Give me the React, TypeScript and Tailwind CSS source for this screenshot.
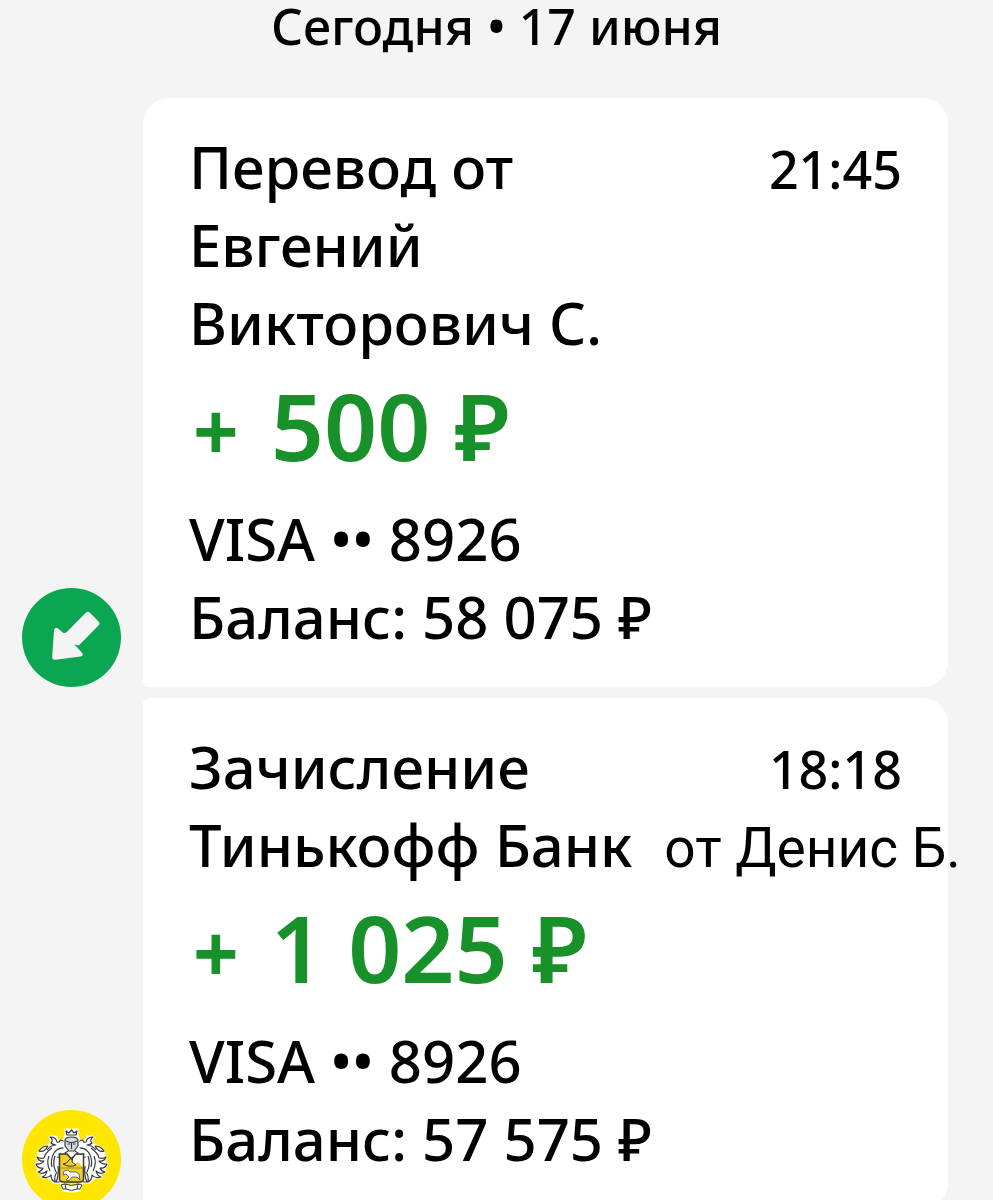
import React from "react";
import clsx from "clsx";

interface Operation {
	title: string[];
	note?: string;
	time: string;
	amount: string;
	card: string;
	balance: string;
	icon: React.ReactNode;
	className: string;
}

const IncomeIcon: React.FC = () => (
	<svg viewBox="0 0 99 99" className="size-[99px] shrink-0" role="img" aria-label="Перевод">
		<circle cx="49.500" cy="49.500" r="49.500" fill="#0aa652" />
		<path
			d="M64 24.500 Q66 22.800 68 24.800 L76.500 33.500 Q78.500 35.500 76.500 37.500 L57.500 56.800 Q56 57.800 54.500 57 L52.200 56.200 L59.800 64.500 Q62.200 68 58.500 68.600 L33.500 71.800 Q30 72 30.200 68.500 L32 42.500 Q32.500 38.500 36 40.500 L41.500 45 Q43.200 45.500 45 43.800 Z"
			fill="#f4f4f4"
		/>
	</svg>
);

// left half of the mantling, the right one is mirrored
const CrestWing: React.FC = () => (
	<g>
		<path
			d="M43 35 L41 31 L35 31 L34 27 L28 27 L30 31 L28 35 L20 38 L17 43 L23 42 L15 47 L18 51 L14 54 L17 58 L16 62 L21 63 L20 67 L26 67 L32 72 L37 72 L37 47 L45 41 Z"
			fill="#fff"
			stroke="#fff"
			strokeWidth="3"
			strokeLinejoin="round"
		/>
		<path
			d="M44 35 Q42 30 38 30 Q38 33 35 32 Q34 27 28 27 Q32 30 29 33 Q31 35 34 35 Q29 35 25 40 M44 38 Q36 37 32 43 Q28 50 30 57 M42 41 Q36 43 36 48 M26 36 Q20 36 17 41 Q22 43 26 36 M30 38 Q23 43 22 48 Q18 49 15 47 Q17 52 22 51 Q19 55 14 54 Q16 59 21 58 Q20 61 16 62 Q21 65 25 61 Q24 66 20 67 Q26 69 29 65 Q29 70 33 72 Q32 66 35 62 M27 46 Q24 53 28 61 M33 46 Q30 54 34 62 M36 56 Q37 66 34 72 H38"
			fill="none"
			stroke="#34383f"
			strokeWidth="1.200"
			strokeLinejoin="round"
		/>
	</g>
);

const BankCrest: React.FC = () => (
	<svg viewBox="0 0 99 99" className="size-[99px] shrink-0" role="img" aria-label="Тинькофф Банк">
		<circle cx="49.500" cy="49.500" r="49.500" fill="#fee600" />
		<CrestWing />
		<g transform="translate(99 0) scale(-1 1)">
			<CrestWing />
		</g>
		<path d="M43 28 V39 L38 45 H61 L56 39 V28 L55 25 V20 H44 V25 Z" fill="#fff" stroke="#fff" strokeWidth="3" />
		<g fill="none" stroke="#34383f" strokeWidth="1.200" strokeLinejoin="round">
			<path d="M44 21 L47 23 L49.500 20 L52 23 L55 21 L54 25 H45 Z" />
			<path d="M43 30 Q44 27 49.500 27 Q55 27 56 30 V36 L52 41 H47 L43 36 Z" fill="#d9dade" />
			<path d="M44 31 L48 32.500 H51 L55 31 M49.500 33 V39 M45.500 34 H48 M51 34 H53.500 M46 41 L43 43 L49.500 50 L56 43 L53 41" />
		</g>
		<path d="M37.500 44 H45 L49.500 49 L54 44 H61.500 V69 Q61.500 72 57 72 H42 Q37.500 72 37.500 69 Z" fill="#f2cf1e" stroke="#34383f" strokeWidth="1.500" />
		<path d="M54 45 H60.500 V57 L56 52 L51 55 L50 50 Z" fill="#fff" />
		<path d="M38 58 H61" stroke="#a08a20" strokeWidth="1" />
		<path d="M41 54 Q45 54 47 50 L51 47 L50 52 L54 55 Q48 58 41 54 Z" fill="none" stroke="#34383f" strokeWidth="1" />
		<path d="M41 65 L42 61 L46 60 L48 62 H54 L57 64 L58 70 L55 67 H50 L47 71 L44 70 L47 67 L44 64 Z" fill="#fff" stroke="#34383f" strokeWidth="0.700" />
		<path d="M40 75 Q49.500 79 59 75 L57 80 Q49.500 82 42 80 Z" fill="#fff" stroke="#fff" strokeWidth="3" />
		<path d="M39 75 L43 74 Q49.500 77 56 74 L60 75 L58 79 L55 79 Q49.500 82 44 79 L41 79 Z M43 74 L44 79 M56 74 L55 79" fill="none" stroke="#34383f" strokeWidth="1" />
	</svg>
);

const OPERATIONS: Operation[] = [
	{
		title: ["Перевод от", "Евгений", "Викторович С."],
		time: "21:45",
		amount: "500 ₽",
		card: "VISA •• 8926",
		balance: "Баланс: 58 075 ₽",
		icon: <IncomeIcon />,
		className: "rounded-[26px] rounded-bl-md",
	},
	{
		title: ["Зачисление", "Тинькофф Банк"],
		note: "от Денис Б.",
		time: "18:18",
		amount: "1 025 ₽",
		card: "VISA •• 8926",
		balance: "Баланс: 57 575 ₽",
		icon: <BankCrest />,
		className: "rounded-[26px] rounded-l-md",
	},
];

const OperationItem: React.FC<{ operation: Operation }> = ({ operation }) => {

	const [firstLine, ...otherLines] = operation.title;

	return (
		<li className="flex items-end gap-[22px]">
			{operation.icon}
			<article
				className={clsx(
					"min-w-0 flex-1 whitespace-nowrap bg-white px-[46px] pt-[30px] pb-[31px] text-[58px] leading-[78px] font-medium",
					operation.className
				)}>
				<div className="flex items-baseline justify-between">
					<h2>{firstLine}</h2>
					<time className="text-[52px] leading-none">{operation.time}</time>
				</div>
				{otherLines.map((line, index) => (
					<p key={line}>
						{line}
						{operation.note && index === otherLines.length - 1 &&
							<span className="ml-8 font-[Roboto,sans-serif] text-[55px] leading-none font-normal">{operation.note}</span>
						}
					</p>
				))}
				<p className="mb-3 flex items-baseline gap-8 pl-1 text-[93px] leading-[126px] font-semibold text-[#18912b]">
					<span className="text-[80px] leading-none font-bold">+</span>
					<span>{operation.amount}</span>
				</p>
				<p>{operation.card}</p>
				<p>{operation.balance}</p>
			</article>
		</li>
	)

}

export default function App() {

	return (
		<main className="min-h-screen bg-[#f4f4f4] pr-[45px] pl-[22px] font-['Noto_Sans',sans-serif] text-black">
			<h1 className="-mr-[23px] h-[98px] text-center text-[50px] leading-[52px] font-medium">Сегодня • 17 июня</h1>
			<ul className="flex flex-col gap-[11px]">
				{OPERATIONS.map((operation) => (
					<OperationItem key={operation.time} operation={operation} />
				))}
			</ul>
		</main>
	);
}
